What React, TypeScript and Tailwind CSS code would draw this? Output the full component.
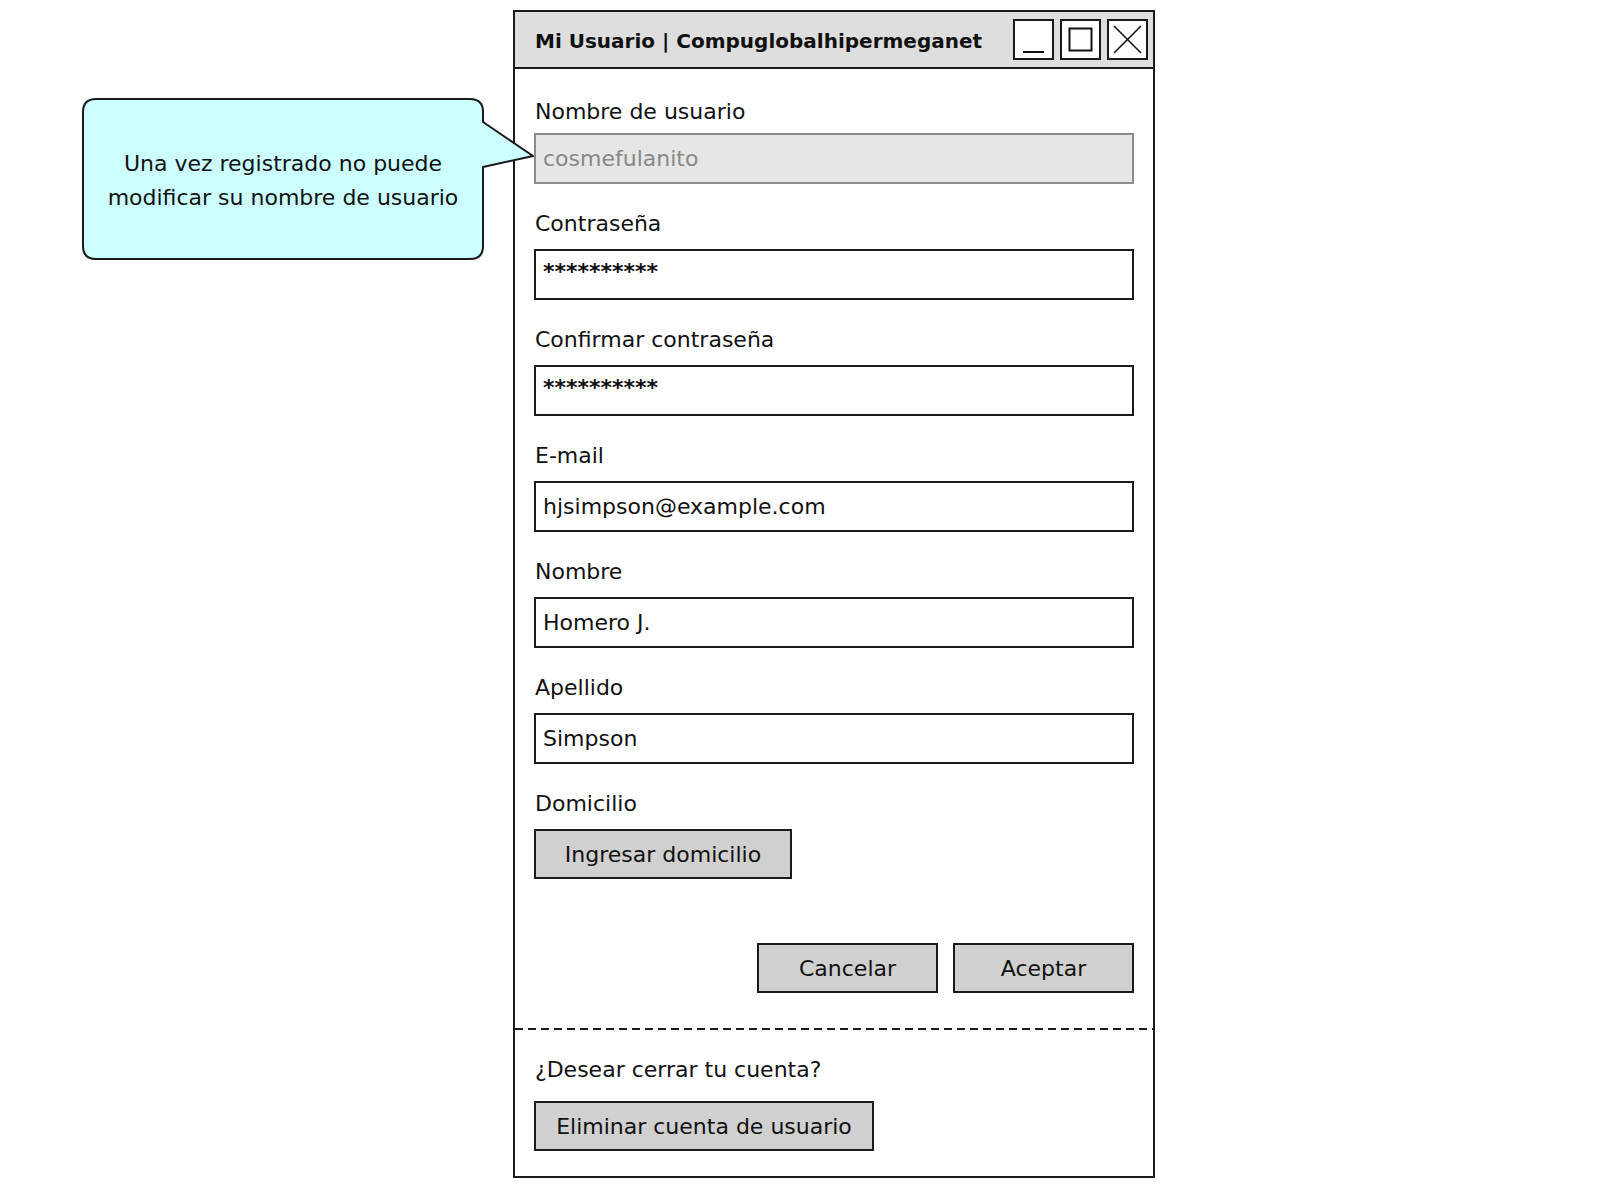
import React from 'react';

const FONT = "font-['Comic_Sans_MS','DejaVu_Sans',sans-serif]";

const fields = [
  { label: 'Nombre de usuario', value: 'cosmefulanito', disabled: true },
  { label: 'Contraseña', value: '**********', secret: true },
  { label: 'Confirmar contraseña', value: '**********', secret: true },
  { label: 'E-mail', value: 'hjsimpson@example.com' },
  { label: 'Nombre', value: 'Homero J.' },
  { label: 'Apellido', value: 'Simpson' },
];

const Callout = () => (
  <div className="absolute left-[80px] top-[96px] w-[460px] h-[168px]">
    <svg width="460" height="168" className="absolute inset-0">
      <path
        d="M 16,3 H 390 Q 403,3 403,16 V 26 L 453,60 L 403,71 V 150 Q 403,163 390,163 H 16 Q 3,163 3,150 V 16 Q 3,3 16,3 Z"
        fill="#ccffff"
        stroke="#1a1a1a"
        strokeWidth="2"
        strokeLinejoin="round"
      />
    </svg>
    <div className="absolute left-[3px] top-[3px] w-[400px] h-[160px] flex flex-col items-center justify-center pt-[4px] text-[22px] leading-[34px] text-[#111]">
      <span>Una vez registrado no puede</span>
      <span>modificar su nombre de usuario</span>
    </div>
  </div>
);

const TitleButton = ({ kind }: { kind: 'min' | 'max' | 'close' }) => (
  <div className="w-[41px] h-[41px] border-2 border-[#1a1a1a] bg-white flex items-center justify-center">
    <svg width="37" height="37" viewBox="0 0 37 37">
      {kind === 'min' && <line x1="8" y1="31" x2="29" y2="31" stroke="#111" strokeWidth="2" />}
      {kind === 'max' && <rect x="7.5" y="7.5" width="22" height="22" fill="none" stroke="#111" strokeWidth="2" />}
      {kind === 'close' && (
        <g stroke="#111" strokeWidth="1.6">
          <line x1="5" y1="5" x2="32" y2="32" />
          <line x1="32" y1="5" x2="5" y2="32" />
        </g>
      )}
    </svg>
  </div>
);

const GrayButton = ({ children, className }: { children: React.ReactNode; className: string }) => (
  <div className={`h-[50px] border-2 border-[#1a1a1a] bg-[#d0d0d0] flex items-center justify-center text-[22px] text-[#111] ${className}`}>
    {children}
  </div>
);

export default function App() {
  return (
    <div className={`relative w-[1600px] min-h-[1200px] bg-white ${FONT}`}>
      <Callout />
      <div className="pl-[513px] pt-[10px]">
        <div className="w-[642px] border-2 border-[#1a1a1a] bg-white">
          <div className="h-[57px] border-b-2 border-[#1a1a1a] bg-[#dedede] flex items-center pl-[20px] pr-[5px]">
            <span className="text-[20px] font-bold text-[#111] pt-[3px]">Mi Usuario | Compuglobalhipermeganet</span>
            <div className="ml-auto flex gap-[6px]">
              <TitleButton kind="min" />
              <TitleButton kind="max" />
              <TitleButton kind="close" />
            </div>
          </div>

          <div className="px-[19px] pt-[25px] flex flex-col">
            <div className="flex flex-col gap-[26px]">
              {fields.map((f, i) => (
                <div key={f.label} className="flex flex-col">
                  <div className={i === 0 ? 'mt-[4px] h-[28px] leading-[28px] text-[22px] text-[#111] pl-[1px]' : 'h-[28px] leading-[28px] text-[22px] text-[#111] pl-[1px]'}>
                    {f.label}
                  </div>
                  <div
                    className={
                      f.disabled
                        ? 'mt-[7px] h-[51px] border-2 border-[#8c8c8c] bg-[#e6e6e6] flex items-center pl-[7px] text-[22px] text-[#888]'
                        : f.secret
                        ? 'mt-[11px] h-[51px] border-2 border-[#1a1a1a] bg-white flex items-center pl-[7px] pb-[6px] text-[22px] font-bold text-[#111]'
                        : 'mt-[11px] h-[51px] border-2 border-[#1a1a1a] bg-white flex items-center pl-[7px] text-[22px] text-[#111]'
                    }
                  >
                    {f.value}
                  </div>
                </div>
              ))}
              <div className="flex flex-col">
                <div className="h-[28px] leading-[28px] text-[22px] text-[#111] pl-[1px]">Domicilio</div>
                <GrayButton className="mt-[11px] w-[258px]">Ingresar domicilio</GrayButton>
              </div>
            </div>

            <div className="mt-[64px] flex justify-end gap-[15px]">
              <GrayButton className="w-[181px]">Cancelar</GrayButton>
              <GrayButton className="w-[181px]">Aceptar</GrayButton>
            </div>
          </div>

          <div className="mt-[35px] h-[2px] bg-[repeating-linear-gradient(to_right,#1a1a1a_0px,#1a1a1a_8px,transparent_8px,transparent_13px)]" />

          <div className="px-[19px] pt-[26px] pb-[25px] flex flex-col">
            <div className="h-[28px] leading-[28px] text-[22px] text-[#111] pl-[1px]">¿Desear cerrar tu cuenta?</div>
            <GrayButton className="mt-[17px] w-[340px]">Eliminar cuenta de usuario</GrayButton>
          </div>
        </div>
      </div>
    </div>
  );
}
